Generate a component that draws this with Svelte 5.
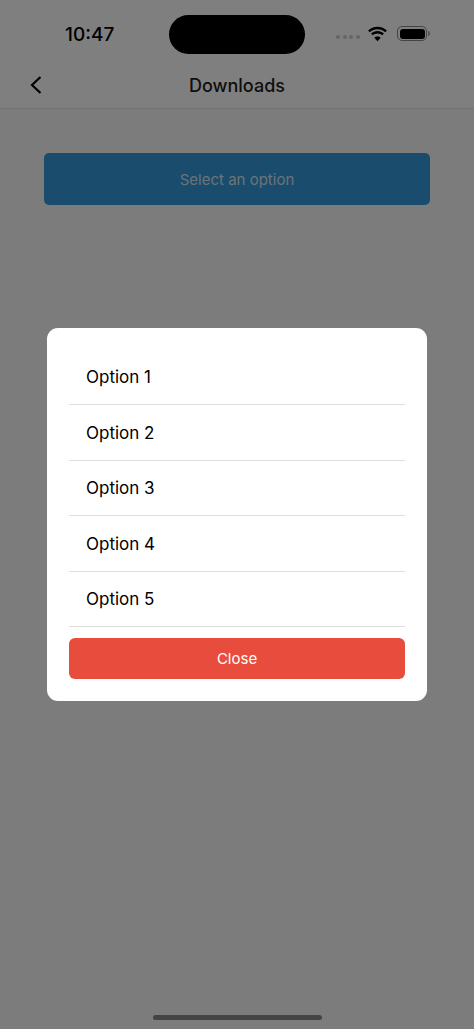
<script>
	let options = ['Option 1', 'Option 2', 'Option 3', 'Option 4', 'Option 5'];
</script>

<div class="screen">
	<div class="status">
		<span class="time">10:47</span>
		<div class="island"></div>
		<div class="status-icons">
			<div class="dots">
				<i></i><i></i><i></i><i></i>
			</div>
			<svg class="wifi" width="21" height="16" viewBox="0 0 21 16">
				<path d="M10.5 3.2c3 0 5.7 1.2 7.8 3.1l1.6-1.7C17.400 2.300 14.100.8 10.500.8S3.600 2.300 1.100 4.600l1.600 1.700c2.100-1.900 4.800-3.100 7.800-3.100z" />
				<path d="M10.500 7.400c1.900 0 3.500.7 4.800 1.900l1.600-1.700c-1.700-1.600-3.900-2.500-6.400-2.500s-4.700.9-6.400 2.500l1.600 1.700c1.300-1.200 2.900-1.900 4.800-1.900z" />
				<path d="M10.500 15.200l3.200-3.500c-.8-.8-2-1.300-3.200-1.300s-2.400.5-3.200 1.300z" />
			</svg>
			<div class="battery">
				<div class="level"></div>
			</div>
			<div class="tip"></div>
		</div>
	</div>

	<header>
		<svg class="back" width="14" height="20" viewBox="0 0 14 20">
			<path d="M11.500 2L3 10l8.500 8" />
		</svg>
		<h1>Downloads</h1>
	</header>

	<main>
		<button class="select">Select an option</button>
	</main>

	<div class="overlay">
		<div class="modal">
			{#each options as option}
				<div class="option">{option}</div>
			{/each}
			<button class="close">Close</button>
		</div>
	</div>

	<div class="home"></div>
</div>

<style>
	:global(body) {
		margin: 0;
		font-family: Inter, "Noto Sans", sans-serif;
	}
	.screen {
		position: relative;
		width: 474px;
		height: 1029px;
		overflow: hidden;
		background-color: #f8f8f8;
	}
	.status {
		height: 69px;
		display: flex;
		align-items: center;
		padding-left: 65px;
		box-sizing: border-box;
		background-color: #fff;
	}
	.time {
		width: 104px;
		font-size: 19px;
		font-weight: 550;
		color: #000;
	}
	.island {
		width: 136px;
		height: 39px;
		border-radius: 20px;
		background-color: #000;
		position: relative;
		z-index: 2;
	}
	.status-icons {
		display: flex;
		align-items: center;
		margin-left: 31px;
		position: relative;
		z-index: 2;
	}
	.dots {
		display: flex;
		gap: 2.500px;
		margin-top: 5px;
		margin-right: 7.500px;
	}
	.dots i {
		width: 4px;
		height: 4px;
		border-radius: 50%;
		background-color: #666;
	}
	.wifi {
		fill: #000;
		margin-right: 9px;
		margin-top: -2px;
	}
	.battery {
		width: 30px;
		height: 15px;
		box-sizing: border-box;
		border: 1px solid #444;
		border-radius: 5px;
		padding: 1.500px;
		margin-top: -2px;
	}
	.level {
		height: 100%;
		border-radius: 3px;
		background-color: #000;
	}
	.tip {
		width: 2px;
		height: 5px;
		margin-left: 1px;
		margin-top: -2px;
		border-radius: 0 2px 2px 0;
		background-color: #555;
	}
	header {
		height: 39px;
		position: relative;
		display: flex;
		align-items: center;
		justify-content: center;
		background-color: #fff;
		border-bottom: 1px solid #e6e6e6;
	}
	.back {
		position: absolute;
		left: 29px;
		top: 6px;
		fill: none;
		stroke: #000;
		stroke-width: 2.200;
	}
	h1 {
		margin: 0;
		font-size: 18px;
		font-weight: 550;
		color: #1c1c1c;
		position: relative;
		top: -3px;
	}
	main {
		padding: 44px 44px 0;
	}
	button {
		display: block;
		width: 100%;
		border: 0;
		font-family: inherit;
	}
	.select {
		height: 52px;
		border-radius: 5px;
		background-color: #3498db;
		color: #d6e6f2;
		font-size: 15px;
	}
	.overlay {
		position: absolute;
		inset: 0;
		display: flex;
		align-items: flex-start;
		justify-content: center;
		padding-top: 328px;
		box-sizing: border-box;
		background-color: rgba(0, 0, 0, 0.5);
	}
	.modal {
		width: 380px;
		box-sizing: border-box;
		padding: 21.500px 22px;
		border-radius: 11px;
		background-color: #fff;
	}
	.option {
		height: 55.500px;
		box-sizing: border-box;
		display: flex;
		align-items: center;
		padding: 1px 0 0 17px;
		border-bottom: 1px solid #ddd;
		font-size: 17px;
		color: #000;
	}
	.close {
		margin-top: 11px;
		height: 41px;
		border-radius: 6px;
		background-color: #e74c3c;
		color: #fff;
		font-size: 15px;
	}
	.home {
		position: absolute;
		left: 153px;
		bottom: 9px;
		width: 169px;
		height: 5px;
		border-radius: 3px;
		background-color: #444;
	}
</style>
